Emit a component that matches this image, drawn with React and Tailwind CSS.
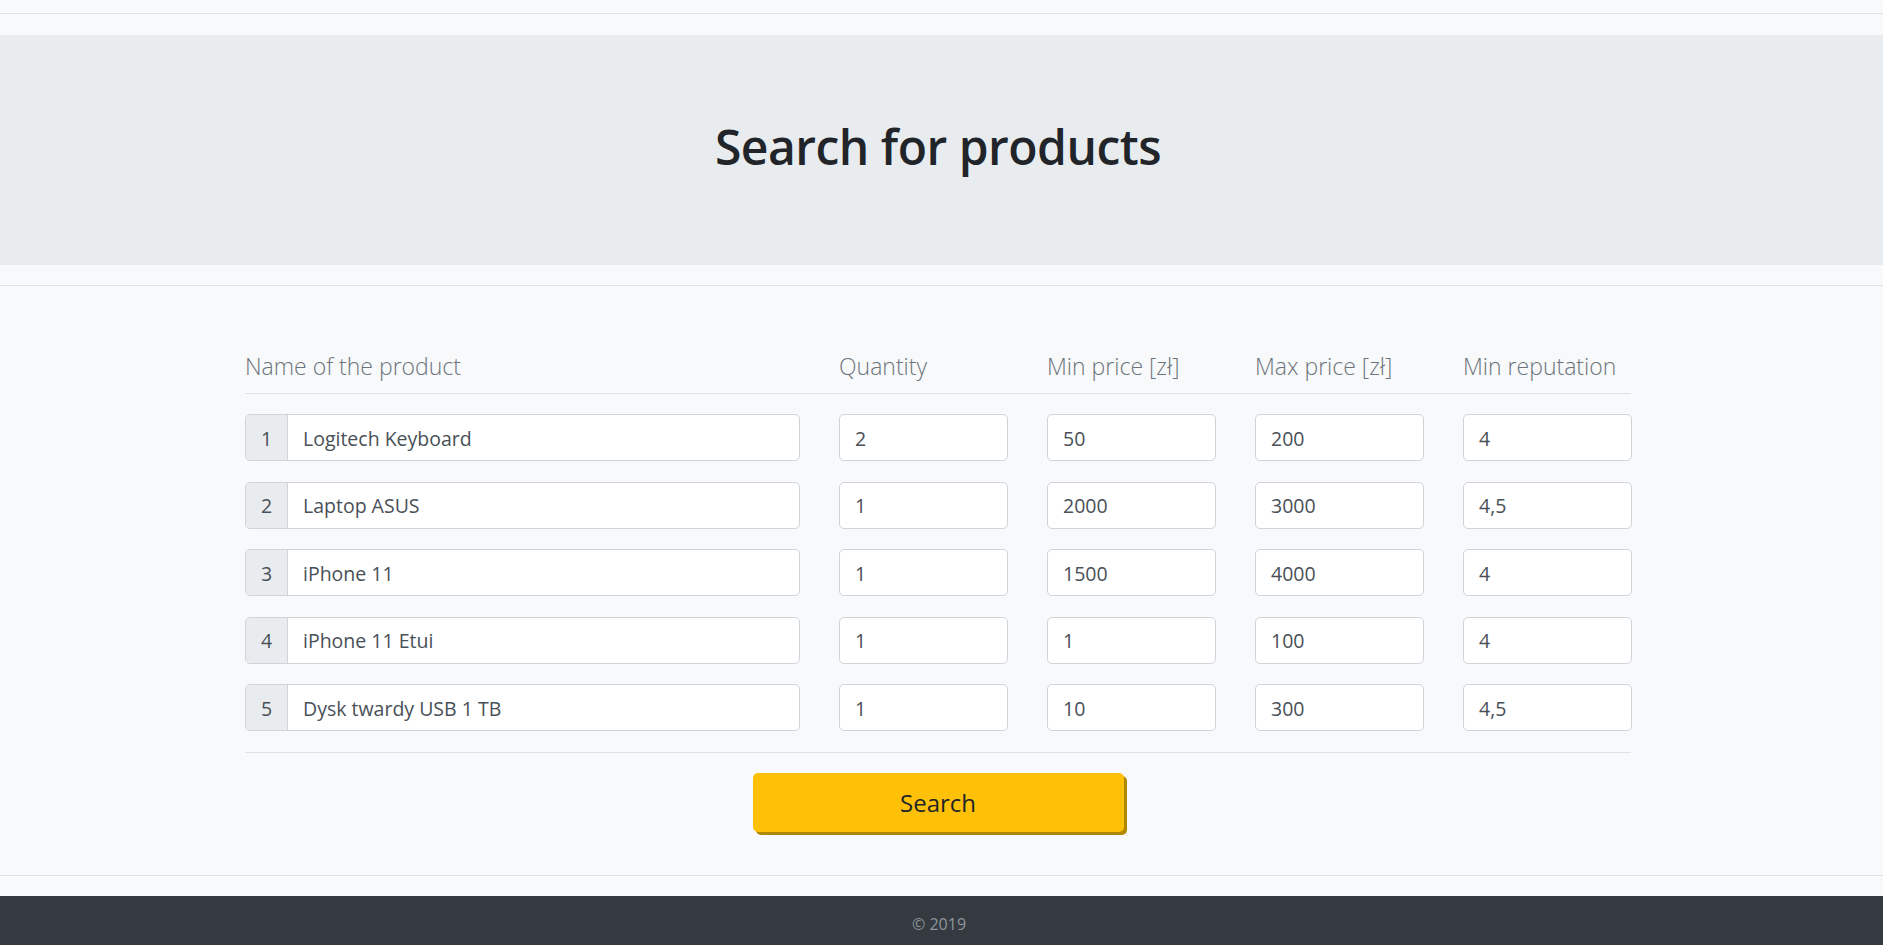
import React from "react";

const rows = [
  ["Logitech Keyboard", "2", "50", "200", "4"],
  ["Laptop ASUS", "1", "2000", "3000", "4,5"],
  ["iPhone 11", "1", "1500", "4000", "4"],
  ["iPhone 11 Etui", "1", "1", "100", "4"],
  ["Dysk twardy USB 1 TB", "1", "10", "300", "4,5"],
];

const headers = ["Name of the product", "Quantity", "Min price [zł]", "Max price [zł]", "Min reputation"];

function Field({ value }) {
  return (
    <div className="h-[47px] flex items-center bg-white border border-[#ced4da] rounded-[5px] px-[15px] pt-[2px] text-[19.5px] text-[#495057]">
      {value}
    </div>
  );
}

export default function App() {
  return (
    <div className="min-h-[945px] bg-[#f8f9fa] flex flex-col" style={{ fontFamily: '"Open Sans", "Noto Sans", sans-serif' }}>
      <div className="h-[14px] border-b border-[#dee2e6]" />
      <div className="h-[21px]" />
      <div className="h-[230px] bg-[#e9ecef] flex items-center">
        <div className="ml-[245px] w-[1386px] text-center">
          <h1 className="text-[48px] font-semibold text-[#212529] leading-[1.2] tracking-[-0.5px] pb-[6px]">Search for products</h1>
        </div>
      </div>
      <div className="h-[20px]" />
      <div className="border-t border-[#dee2e6] pt-[65px]">
        <div className="ml-[245px] w-[1386px]">
          <div className="grid grid-cols-[555px_repeat(4,169px)] gap-x-[39px] border-b border-[#dee2e6] pb-[12px]">
            {headers.map((h) => (
              <div key={h} className="text-[23px] font-light leading-[30px] text-[#6c757d] whitespace-nowrap">{h}</div>
            ))}
          </div>
          <div className="flex flex-col gap-[20.5px] pt-[20px] pb-[21px] border-b border-[#dee2e6]">
            {rows.map((r, i) => (
              <div key={i} className="grid grid-cols-[555px_repeat(4,169px)] gap-x-[39px]">
                <div className="h-[47px] flex border border-[#ced4da] rounded-[5px] overflow-hidden bg-white">
                  <div className="w-[42px] shrink-0 bg-[#e9ecef] border-r border-[#ced4da] flex items-center justify-center pt-[2px] text-[19.5px] text-[#495057]">
                    {i + 1}
                  </div>
                  <div className="flex items-center px-[15px] pt-[2px] text-[19.5px] text-[#495057]">{r[0]}</div>
                </div>
                {r.slice(1).map((v, j) => (
                  <Field key={j} value={v} />
                ))}
              </div>
            ))}
          </div>
          <div className="flex justify-center pt-[20px] pb-[43px]">
            <div className="w-[371px] h-[59px] bg-[#ffc107] rounded-[5px] shadow-[3px_3px_0_#b08700] flex items-center justify-center text-[24px] text-[#212529]">
              Search
            </div>
          </div>
        </div>
      </div>
      <div className="border-t border-[#dee2e6] h-[21px]" />
      <div className="flex-1 bg-[#343a40] flex justify-center pt-[16px] min-h-[48px]">
        <div className="ml-[-5px] text-[16px] text-[#8f959c]">© 2019</div>
      </div>
    </div>
  );
}
